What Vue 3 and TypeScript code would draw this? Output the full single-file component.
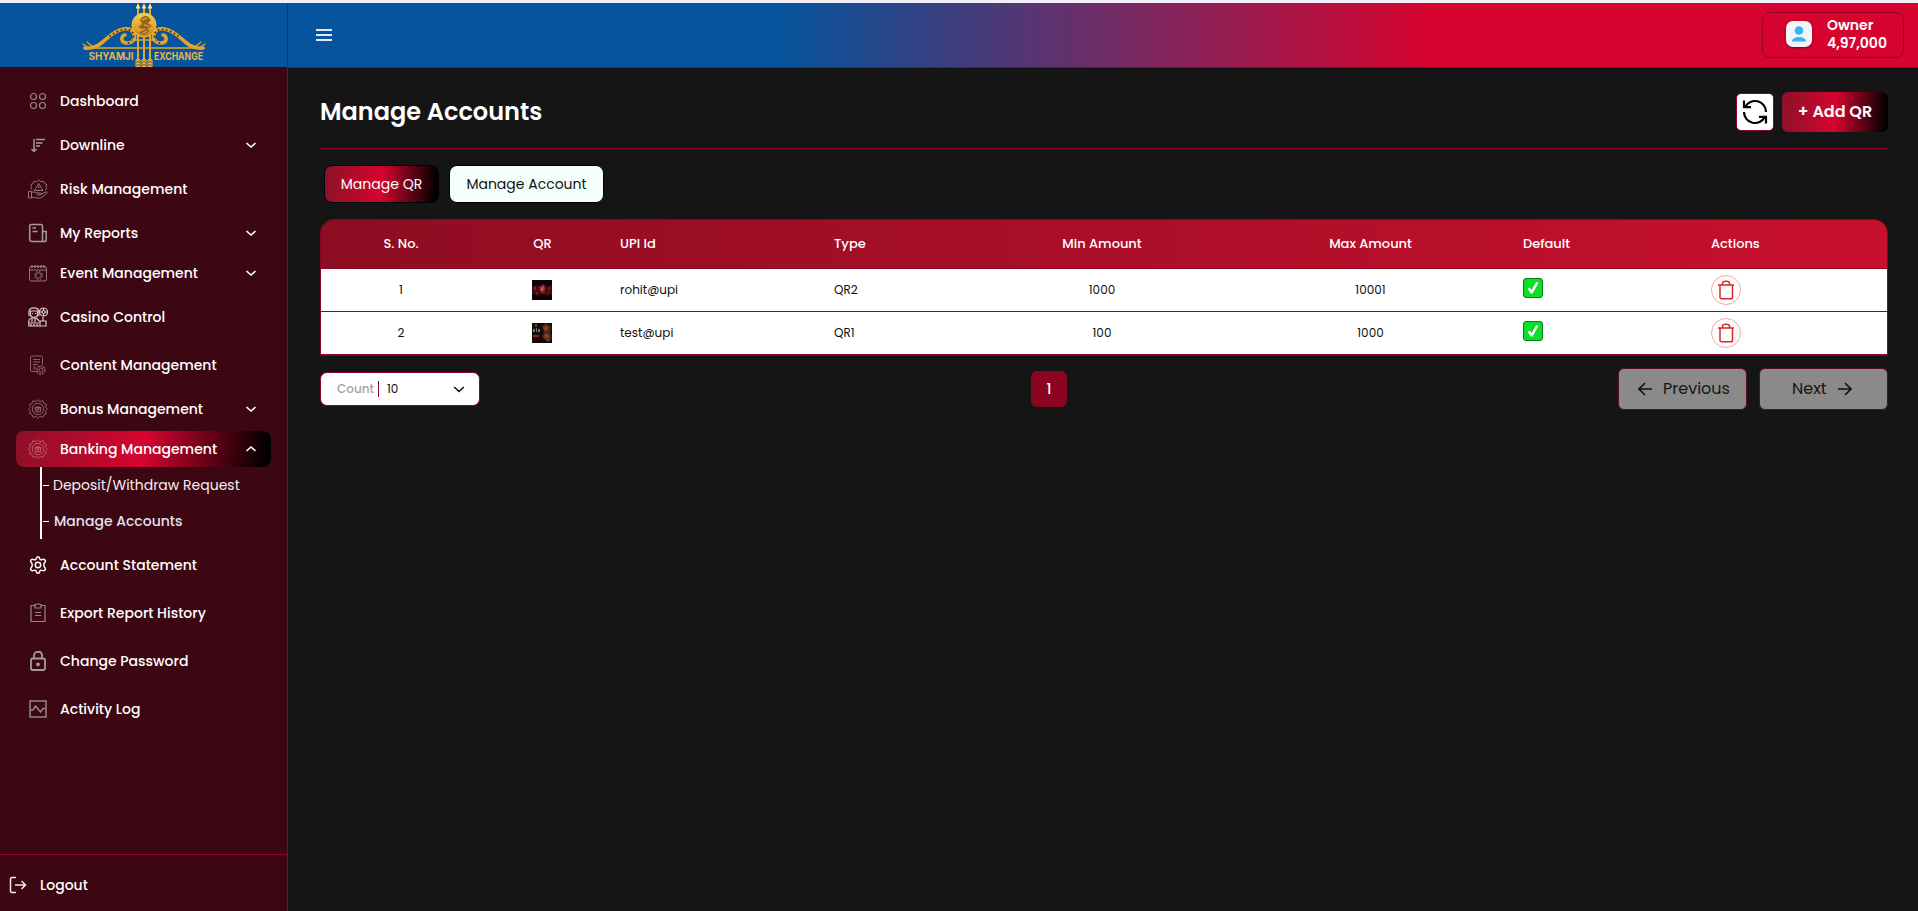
<script setup lang="ts">
import { ref } from 'vue'

interface SubItem {
  label: string
  weight: string
}

interface MenuItem {
  label: string
  icon: string
  dropdown?: boolean
  open?: boolean
  children?: SubItem[]
}

interface Account {
  id: number
  upi: string
  type: string
  min: number
  max: number
}

const menu = ref<MenuItem[]>([
  { label: 'Dashboard', icon: 'dashboard' },
  { label: 'Downline', icon: 'downline', dropdown: true },
  { label: 'Risk Management', icon: 'risk' },
  { label: 'My Reports', icon: 'reports', dropdown: true },
  { label: 'Event Management', icon: 'event', dropdown: true },
  { label: 'Casino Control', icon: 'casino' },
  { label: 'Content Management', icon: 'document' },
  { label: 'Bonus Management', icon: 'bonus', dropdown: true },
  {
    label: 'Banking Management',
    icon: 'bonus',
    dropdown: true,
    open: true,
    children: [
      { label: 'Deposit/Withdraw Request', weight: 'normal' },
      { label: 'Manage Accounts', weight: 'medium' }
    ]
  },
  { label: 'Account Statement', icon: 'settings' },
  { label: 'Export Report History', icon: 'export' },
  { label: 'Change Password', icon: 'lock' },
  { label: 'Activity Log', icon: 'activity' }
])

const accounts = ref<Account[]>([
  { id: 1, upi: 'rohit@upi', type: 'QR2', min: 1000, max: 10001 },
  { id: 2, upi: 'test@upi', type: 'QR1', min: 100, max: 1000 }
])

const activeTab = ref('qr')

const toggle = (item: MenuItem) => {
  if (item.dropdown) item.open = !item.open
}
</script>

<template>
  <div class="layout">
    <aside class="sidebar">
      <div class="brand">
        <svg width="124" height="64" viewBox="0 0 124 64">
          <defs>
            <linearGradient id="gold" x1="0" y1="0" x2="0" y2="1">
              <stop offset="0" stop-color="#fbd04c" />
              <stop offset="1" stop-color="#c98716" />
            </linearGradient>
          </defs>
          <g fill="none" stroke="#e0a52c" stroke-linecap="round">
            <path d="M2 45H122" stroke-width="1.6" />
            <path d="M3 45C17 47 23 35 32 30C40 25 48 24 51 29C55 36 51 40 45 40C39 40 38 33 43 32" stroke-width="3.6" />
            <path d="M121 45C107 47 101 35 92 30C84 25 76 24 73 29C69 36 73 40 79 40C85 40 86 33 81 32" stroke-width="3.6" />
            <path d="M28 33C36 27 47 23 51 30C53 35 50 39 46 40M96 33C88 27 77 23 73 30C71 35 74 39 78 40" stroke="#4a3210" stroke-width="1.8" stroke-dasharray="0.2 4" />
            <path d="M1 41L7 45M5 39L11 44M123 41L117 45M119 39L113 44" stroke-width="1.3" />
            <path d="M56 3V62M62 3V62M68 3V62" stroke-width="2" />
            <path d="M50 37H74" stroke-width="1.6" />
          </g>
          <path d="M56 0L58.4 5.5H53.6ZM62 0L64.4 5.5H59.6ZM68 0L70.4 5.5H65.6Z" fill="#ffe08a" />
          <path d="M53.500 57l2.500-2 2.500 2v7h-5zM59.500 57l2.500-2 2.500 2v7h-5zM65.500 57l2.500-2 2.500 2v7h-5z" fill="#e0ab43" />
          <path d="M54 60l2-2 2 2M54 63l2-2 2 2M60 60l2-2 2 2M60 63l2-2 2 2M66 60l2-2 2 2M66 63l2-2 2 2" fill="none" stroke="#6b4612" stroke-width=".8" />
          <circle cx="62" cy="22" r="12" fill="url(#gold)" stroke="#f3c04a" />
          <path d="M58 17C60 12 66 12 67 15L69 17L66 20L70 23L66 25L67 29L62 32L57 30L60 26L56 24L60 21Z" fill="#9a651a" />
          <path d="M60 17L65 15M58 28L63 26M62 22L67 23M61 30L65 28" stroke="#e7b040" stroke-width="1.1" fill="none" />
          <text x="6.500" y="57" textLength="45" lengthAdjust="spacingAndGlyphs" class="brand-text">SHYAMJI</text>
          <text x="72" y="57" textLength="49" lengthAdjust="spacingAndGlyphs" class="brand-text">EXCHANGE</text>
        </svg>
      </div>

      <nav class="menu">
        <template v-for="item in menu" :key="item.label">
          <div
            class="menu-item"
            :class="{ dropdown: item.dropdown, active: item.children && item.open }"
            @click="toggle(item)"
          >
            <svg class="menu-icon" :class="item.icon" width="20" height="20" viewBox="0 0 20 20" fill="none">
              <g v-if="item.icon === 'dashboard'">
                <circle cx="5.500" cy="5.500" r="3" />
                <circle cx="14.500" cy="5.500" r="3" />
                <circle cx="5.500" cy="14.500" r="3" />
                <circle cx="14.500" cy="14.500" r="3" />
              </g>
              <g v-else-if="item.icon === 'downline'">
                <path d="M6 4V16M3.500 14L6 16.500L8.500 14M8 4.500H17M8 8H14.500M8 11H12" />
              </g>
              <g v-else-if="item.icon === 'risk'">
                <path d="M4.500 11L2.800 9.500L3.500 7.500L2.800 5.500L5 4.500L6 2.300L8.500 2.800L10.800 1L13 2.800L15.500 2.300L16.500 4.500L18.800 5.500L18 7.500L18.800 9.500L17 11" />
                <path d="M10.800 4.500L15 11.500H6.500ZM10.800 7V9.200M10.800 10V10.600" />
                <path d="M.5 12.500H3.500V19H.5ZM3.500 13.500C6 12 8 14 10 14H12.500C13.500 14 13.500 15.800 12 15.800H8.500M12.500 15.500L17.500 13C19 12.500 19.800 13.500 18.500 14.500L13.500 18.500C11 20 8 18.500 3.500 18.200" />
              </g>
              <g v-else-if="item.icon === 'reports'">
                <path d="M15.500 18.500H4A2.500 2.500 0 0 1 1.700 16.200V3A1.500 1.500 0 0 1 3.200 1.500H13A1.500 1.500 0 0 1 14.500 3V17A1.500 1.500 0 0 0 16.500 18.500A1.500 1.500 0 0 0 18.200 17V8.500H14.500" />
                <path d="M4.500 5H8M4.500 8.500H9.500" />
              </g>
              <g v-else-if="item.icon === 'event'">
                <rect x="1.500" y="3.500" width="17" height="14.500" rx="2" />
                <path d="M1.500 7H18.500" />
                <path d="M4 2V5M7 2V5M10 2V5M13 2V5M16 2V5" stroke-width="1.500" />
                <circle cx="10.500" cy="12.500" r="2.800" />
                <circle cx="10.500" cy="12.500" r="4.200" stroke-dasharray="1.6 1.7" />
              </g>
              <g v-else-if="item.icon === 'casino'">
                <path d="M1 5C1 2 3 .8 6 .8S11 2 11 5M2.500 4H9.500V8C9.500 11 2.500 11 2.500 8ZM1 5V9M11 5V9M4.500 6V7M7.500 6V7" />
                <circle cx="15.500" cy="5" r="4" />
                <circle cx="15.500" cy="5" r="1.500" />
                <path d="M15.500 1V3.500M15.500 6.500V9M11.500 5H14M17 5H19.500M15 10V14H18V19H.8V14C1 11.500 3 11 6 11S10 12 11 14H18M1 16H11M4 12V15M7 12V15M12 14V19M3 17V19M6 17V19M9 17V19" />
              </g>
              <g v-else-if="item.icon === 'document'">
                <path d="M9.500 16.500H4A1.500 1.500 0 0 1 2.500 15V2.500A1.500 1.500 0 0 1 4 1H13A1.500 1.500 0 0 1 14.500 2.500V9.500M5 4.500H12M5 7H12M5 9.500H10M5 12H8M5 14H8" />
                <circle cx="13" cy="15" r="4" stroke-width="1.400" stroke-dasharray="2 1" />
                <circle cx="13" cy="15" r="2" />
              </g>
              <g v-else-if="item.icon === 'bonus'">
                <path d="M10 .6L12 2.800L15 1.600L16 4.500L18.600 5.500L17.400 8L19.500 10L17.400 12L18.600 14.500L16 15.500L15 18.400L12 17.200L10 19.400L8 17.200L5 18.400L4 15.500L1.400 14.500L2.600 12L.5 10L2.600 8L1.400 5.500L4 4.500L5 1.600L8 2.800Z" />
                <circle cx="10" cy="10" r="5.700" />
                <path d="M7 8.500H13V10H7ZM7.500 10V12.800H12.500V10M10 8.500V12.800M10 8.500L8.500 7M10 8.500L11.500 7" />
              </g>
              <g v-else-if="item.icon === 'settings'">
                <path d="M8.300 3.600C8.500 1 11.500 1 11.700 3.600C12 4.700 13 5.200 14 4.600C16.500 3.300 18.500 6 16.700 7.500C15.500 8.500 15.500 11.500 16.700 12.500C18.500 14 16.500 16.700 14 15.400C13 14.800 12 15.300 11.700 16.400C11.500 19 8.500 19 8.300 16.400C8 15.300 7 14.800 6 15.400C3.500 16.700 1.500 14 3.300 12.500C4.500 11.500 4.500 8.500 3.300 7.500C1.500 6 3.500 3.300 6 4.600C7 5.200 8 4.700 8.300 3.600Z" />
                <circle cx="10" cy="10" r="2.700" />
              </g>
              <g v-else-if="item.icon === 'export'">
                <path d="M7 2.500H3V18.500H17V2.500H13M7 1.500H8.500C8.700 .5 11.300 .5 11.500 1.500H13V5H7ZM7 9.500H13M7 12.500H13" />
              </g>
              <g v-else-if="item.icon === 'lock'">
                <rect x="3" y="7.500" width="14" height="11.500" rx="1.500" />
                <path d="M6 7.500V4.500C6 -.5 14 -.5 14 4.500V7.500" />
                <circle cx="10" cy="13.300" r="1" />
              </g>
              <g v-else>
                <rect x="2" y="2" width="16" height="16" />
                <path d="M2 11H5L7.500 7L12.500 13L15 9.500H18" />
              </g>
            </svg>
            <span class="menu-label">{{ item.label }}</span>
            <svg v-if="item.dropdown" class="chevron" width="12" height="12" viewBox="0 0 12 12">
              <path :d="item.open ? 'M1.500 8L6 4L10.500 8' : 'M1.500 4L6 8L10.500 4'" />
            </svg>
          </div>
          <ul v-if="item.children && item.open" class="submenu">
            <li v-for="sub in item.children" :key="sub.label" :class="sub.weight">
              <i class="dash"></i>{{ sub.label }}
            </li>
          </ul>
        </template>
      </nav>

      <div class="logout">
        <svg width="18" height="18" viewBox="0 0 18 18">
          <path d="M7 1.500H3A1.500 1.500 0 0 0 1.500 3V15A1.500 1.500 0 0 0 3 16.500H7M6 9H16.500M12.500 5L16.500 9L12.500 13" />
        </svg>
        <span>Logout</span>
      </div>
    </aside>

    <div class="main">
      <header class="topbar">
        <svg class="burger" width="16" height="12" viewBox="0 0 16 12">
          <path d="M0 1H16M0 6H16M0 11H16" />
        </svg>
        <div class="owner">
          <span class="avatar">
            <svg width="16" height="16" viewBox="0 0 16 16">
              <circle cx="8" cy="4.500" r="4.300" fill="#37b4ee" />
              <path d="M1 15.500C1 9.500 15 9.500 15 15.500Z" fill="#37b4ee" />
            </svg>
          </span>
          <div class="owner-text">
            <div>Owner</div>
            <div class="balance">4,97,000</div>
          </div>
        </div>
      </header>

      <main class="content">
        <div class="page-head">
          <h1>Manage Accounts</h1>
          <div class="head-actions">
            <button class="refresh">
              <svg width="26" height="26" viewBox="0 0 26 26">
                <path d="M2 1.500V8.200H9M3.200 8A11 11 0 0 1 24 13M24 24.500V17.800H17M22.800 18A11 11 0 0 1 2 13" />
              </svg>
            </button>
            <button class="add">+ Add QR</button>
          </div>
        </div>

        <div class="tabs">
          <button class="tab tab-qr" :class="{ selected: activeTab === 'qr' }" @click="activeTab = 'qr'">Manage QR</button>
          <button class="tab tab-account" :class="{ selected: activeTab === 'account' }" @click="activeTab = 'account'">Manage Account</button>
        </div>

        <div class="table-wrap">
          <table>
            <colgroup>
              <col class="c-no" />
              <col class="c-qr" />
              <col class="c-upi" />
              <col class="c-type" />
              <col class="c-min" />
              <col class="c-max" />
              <col class="c-default" />
              <col class="c-actions" />
            </colgroup>
            <thead>
              <tr>
                <th class="center">S. No.</th>
                <th class="center">QR</th>
                <th>UPI Id</th>
                <th>Type</th>
                <th class="center">Min Amount</th>
                <th class="center max">Max Amount</th>
                <th>Default</th>
                <th>Actions</th>
              </tr>
            </thead>
            <tbody>
              <tr v-for="row in accounts" :key="row.id">
                <td class="center">{{ row.id }}</td>
                <td class="center qr">
                  <svg v-if="row.id === 1" class="thumb" width="20" height="20" viewBox="0 0 20 20">
                    <rect width="20" height="20" fill="#0b0305" />
                    <path d="M0 7L4 5L7 8L11 4L15 7L20 5V14L15 16L11 14L5 16L0 13Z" fill="#3d0a10" />
                    <path d="M6 7L12 4L14 8L12 14L8 12Z" fill="#8c1a22" />
                    <path d="M9 8L12 6L11 11L9 11Z" fill="#c4605e" />
                    <path d="M2 7h2v3H2zM16 7h2v3h-2zM4 12h2v2H4zM15 12h2v1h-2z" fill="#8b1820" />
                  </svg>
                  <svg v-else class="thumb" width="20" height="20" viewBox="0 0 20 20">
                    <rect width="20" height="20" fill="#140b0a" />
                    <path d="M10 3L14 0L19 4L18 10L20 15L16 19L10 14L12 9Z" fill="#572417" />
                    <path d="M13 3L16 4L15 8L12 7ZM12 12L16 11L17 15L13 15Z" fill="#8a4527" />
                    <path d="M1 6h2v3H1zM4 5h1v4H4zM6 6h2v3H6z" fill="#75706c" />
                    <path d="M1 12h6v2H1z" fill="#8c1f1e" />
                    <path d="M3 1h2v3H3z" fill="#4b4a1d" />
                    <path d="M14 16h4v2h-4z" fill="#41464c" />
                  </svg>
                </td>
                <td>{{ row.upi }}</td>
                <td>{{ row.type }}</td>
                <td class="center">{{ row.min }}</td>
                <td class="center max">{{ row.max }}</td>
                <td>
                  <svg class="check" width="20" height="20" viewBox="0 0 20 20">
                    <rect x=".5" y=".5" width="19" height="19" rx="2.500" fill="#0be029" stroke="#0a7d1c" />
                    <path d="M4.600 10.800L6.600 9.600L8.500 12.200L13.200 4L15.600 4.600L9.600 15.600H7.800Z" fill="#fff" />
                  </svg>
                </td>
                <td>
                  <svg class="trash" width="30" height="30" viewBox="0 0 30 30" fill="none">
                    <circle cx="15" cy="15" r="14.500" stroke="#f9a3a3" />
                    <path d="M7 10H23M9 10V22A1.800 1.800 0 0 0 10.800 23.800H19.700A1.800 1.800 0 0 0 21.500 22V10M11.500 10V8.300C11.500 5.700 18.500 5.700 18.500 8.300V10" stroke="#dc2626" stroke-width="1.500" />
                  </svg>
                </td>
              </tr>
            </tbody>
          </table>
        </div>

        <div class="pagination">
          <div class="count">
            <span class="count-label">Count</span>
            <span class="count-value">10</span>
            <svg width="12" height="12" viewBox="0 0 12 12">
              <path d="M1.200 4L6 8.500L10.800 4" />
            </svg>
          </div>
          <div class="page">1</div>
          <div class="pager">
            <button class="prev">
              <svg width="14" height="14" viewBox="0 0 14 14"><path d="M14 7H1M7 1L1 7L7 13" /></svg>
              <span>Previous</span>
            </button>
            <button class="next">
              <span>Next</span>
              <svg width="14" height="14" viewBox="0 0 14 14"><path d="M0 7H13M7 1L13 7L7 13" /></svg>
            </button>
          </div>
        </div>
      </main>
    </div>
  </div>
</template>

<style>
body {
  background: #151515;
}
</style>

<style scoped>
.layout {
  display: flex;
  box-sizing: border-box;
  height: 911px;
  border-top: 3px solid #f2effa;
  background: #151515;
  color: #fff;
  font-family: Poppins, Inter, 'Noto Sans', sans-serif;
}

.layout *,
.layout *::before {
  box-sizing: border-box;
}

button {
  font-family: inherit;
  padding: 0;
  cursor: pointer;
}

/* sidebar */
.sidebar {
  display: flex;
  flex-direction: column;
  width: 288px;
  flex-shrink: 0;
  background: #3c0612;
  border-right: 1px solid #850a24;
}

.brand {
  display: flex;
  justify-content: center;
  height: 64px;
  background: #05549d;
}

.brand svg {
  overflow: visible;
}

.brand-text {
  fill: #eab544;
  font-family: Inter, sans-serif;
  font-size: 10.5px;
  font-weight: 700;
}

.menu {
  display: flex;
  flex-direction: column;
  flex: 1;
  padding: 10px 16px;
}

.menu-item {
  display: flex;
  align-items: center;
  height: 36px;
  margin: 6px 0;
  padding: 0 14px 0 12px;
  border-radius: 8px;
  font-size: 14px;
  font-weight: 500;
  cursor: pointer;
}

.menu-item.dropdown {
  margin: 2px 0;
}

.menu-item.active {
  margin-bottom: 0;
  background: linear-gradient(98deg, #8b1128 0%, #d6042f 50%, #000 98%);
}

.menu-icon {
  flex-shrink: 0;
  margin-right: 12px;
  stroke: #958688;
  stroke-width: 1.2;
}

.menu-icon.downline,
.menu-icon.reports {
  stroke: #a59a9c;
  stroke-width: 1.5;
}

.menu-icon.risk,
.menu-icon.event {
  stroke: #8f787c;
  stroke-width: 1;
}

.menu-icon.document,
.menu-icon.bonus {
  stroke: #8f6c75;
  stroke-width: 0.9;
}

.active .menu-icon.bonus {
  stroke: #c0606f;
}

.menu-icon.casino {
  stroke: #d8c8cc;
}

.menu-icon.settings {
  stroke: #fff;
  stroke-width: 1.5;
}

.menu-icon.lock {
  stroke: #a59a9c;
  stroke-width: 1.8;
}

.menu-icon.activity {
  stroke-width: 1.5;
}

.menu-label {
  flex: 1;
  white-space: nowrap;
}

.chevron {
  fill: none;
  stroke: #fff;
  stroke-width: 1.6;
}

.submenu {
  margin: 0 0 2px 24px;
  padding: 0;
  list-style: none;
  border-left: 2px solid #fff;
}

.submenu li {
  display: flex;
  align-items: center;
  height: 36px;
  padding-left: 1px;
  color: #f3eef1;
  font-size: 14px;
  font-weight: 400;
  white-space: nowrap;
}

.submenu .medium {
  color: #e2e0f0;
  font-weight: 500;
}

.dash {
  width: 6px;
  height: 1px;
  margin-right: 5px;
  background: #fff;
}

.submenu .normal .dash {
  margin-right: 4px;
}

.logout {
  display: flex;
  align-items: center;
  height: 57px;
  padding: 4px 0 0 9px;
  border-top: 1px solid #8b0522;
  font-size: 14px;
  font-weight: 500;
}

.logout svg {
  margin-right: 13px;
  fill: none;
  stroke: #f3e9eb;
  stroke-width: 1.5;
}

/* top bar */
.main {
  flex: 1;
  min-width: 0;
}

.topbar {
  display: flex;
  align-items: center;
  justify-content: space-between;
  height: 65px;
  padding: 0 14px 0 28px;
  background: linear-gradient(90deg, #05549d 30%, #d6042f 70%);
  border-bottom: 1px solid #850a24;
}

.burger {
  stroke: #e3e8f3;
  stroke-width: 2;
}

.owner {
  display: flex;
  align-items: center;
  width: 142px;
  height: 46px;
  padding-left: 23px;
  border: 1px solid #960624;
  border-radius: 8px;
}

.avatar {
  display: flex;
  align-items: center;
  justify-content: center;
  width: 26px;
  height: 26px;
  margin: 0 15px 3px 0;
  border-radius: 7px;
  background: #f3f4f9;
  box-shadow: 0 1px 3px rgba(0, 0, 0, 0.4);
}

.owner-text {
  padding-bottom: 2px;
  font-size: 14px;
  font-weight: 600;
  line-height: 18px;
}

/* content */
.content {
  padding: 24px 30px 0 32px;
}

.page-head {
  display: flex;
  align-items: center;
  justify-content: space-between;
  height: 57px;
  padding-bottom: 16px;
  border-bottom: 1px solid #8b0522;
}

h1 {
  margin: 0;
  padding-bottom: 2px;
  font-size: 24px;
  font-weight: 600;
}

.head-actions {
  display: flex;
  align-items: center;
  gap: 8px;
}

.refresh {
  display: flex;
  align-items: center;
  justify-content: center;
  width: 38px;
  height: 38px;
  background: #fff;
  border: 1px solid #8b0522;
  border-radius: 5px;
}

.refresh path {
  fill: none;
  stroke: #000;
  stroke-width: 2.2;
}

.add {
  width: 106px;
  height: 40px;
  padding-bottom: 2px;
  border: 0;
  border-radius: 6px;
  background: linear-gradient(94deg, #8b1128 0%, #d6042f 50%, #000 98%);
  color: #fff;
  font-size: 16px;
  font-weight: 600;
}

.tabs {
  display: flex;
  gap: 10px;
  padding: 16px 4px;
}

.tab {
  height: 38px;
  border: 1px solid #000;
  border-radius: 8px;
  background: #f5fffa;
  color: #111;
  font-size: 14px;
}

.tab.selected {
  background: linear-gradient(94deg, #8b1128 0%, #d6042f 50%, #000 98%);
  color: #fff;
}

.tab-qr {
  width: 115px;
}

.tab-account {
  width: 155px;
}

/* table */
.table-wrap {
  height: 137px;
  border: 1px solid #8b0522;
  border-radius: 14px 14px 0 0;
  overflow: hidden;
}

table {
  width: 100%;
  table-layout: fixed;
  border-collapse: separate;
  border-spacing: 0;
}

.c-no { width: 160px; }
.c-qr { width: 123px; }
.c-upi { width: 214px; }
.c-type { width: 153px; }
.c-min { width: 262px; }
.c-max { width: 274px; }
.c-default { width: 188px; }
.c-actions { width: 192px; }

thead {
  background: linear-gradient(98deg, #8d0d22, #c8102e);
}

th {
  height: 49px;
  padding: 0 16px;
  border-bottom: 1px solid #8b0522;
  font-size: 13px;
  font-weight: 500;
  text-align: left;
}

td {
  height: 43px;
  padding: 0 16px;
  border-bottom: 1px solid #8b0522;
  background: #fff;
  color: #111;
  font-size: 12px;
}

.center {
  text-align: center;
}

.center.max {
  padding-right: 15px;
}

td.qr {
  padding-right: 17px;
}

td svg {
  display: block;
}

.thumb {
  margin: 0 auto;
}

.check {
  margin-bottom: 4px;
}

/* pagination */
.pagination {
  display: flex;
  align-items: center;
  justify-content: space-between;
  margin-top: 12px;
}

.count {
  display: flex;
  align-items: center;
  width: 160px;
  height: 34px;
  padding: 0 14px 0 16px;
  background: #fff;
  border: 1px solid #8b0522;
  border-radius: 7px;
  color: #111;
  font-size: 12px;
}

.count-label {
  width: 42px;
  height: 16px;
  line-height: 16px;
  border-right: 1px solid #8b0522;
  color: #a3a3a3;
  font-weight: 500;
}

.count-value {
  flex: 1;
  padding-left: 8px;
}

.count path,
.pager path {
  fill: none;
  stroke: #111;
  stroke-width: 1.6;
}

.page {
  width: 36px;
  height: 36px;
  border-radius: 6px;
  background: #8b0522;
  font-size: 14px;
  font-weight: 500;
  line-height: 36px;
  text-align: center;
}

.pager {
  display: flex;
  gap: 12px;
}

.pager button {
  display: flex;
  align-items: center;
  width: 129px;
  height: 42px;
  padding-left: 19px;
  background: #8a8a8a;
  border: 1px solid #5a0d20;
  border-radius: 6px;
  color: #161616;
  font-size: 16px;
}

.pager span {
  padding-bottom: 1px;
}

.pager .prev {
  gap: 11px;
}

.pager .next {
  gap: 11px;
  padding-left: 32px;
}
</style>
